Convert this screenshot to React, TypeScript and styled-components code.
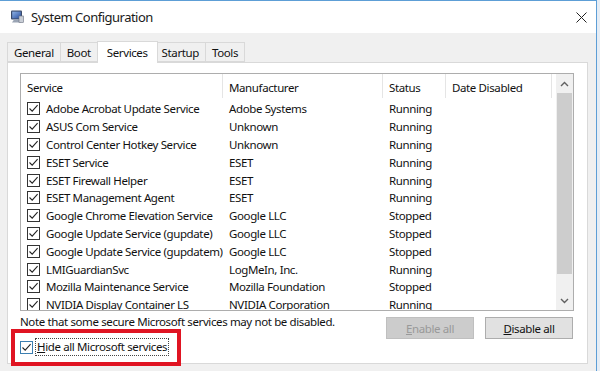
import React from 'react'
import styled, { createGlobalStyle } from 'styled-components'

const GlobalStyle = createGlobalStyle`
  html, body {
    margin: 0;
    padding: 0;
    background: #eef2f7;
  }
  body {
    font-family: 'Noto Sans', 'Open Sans', sans-serif;
    color: #000;
  }
`

type Service = {
  name: string
  maker: string
  status: string
}

const services: Service[] = [
  { name: 'Adobe Acrobat Update Service', maker: 'Adobe Systems', status: 'Running' },
  { name: 'ASUS Com Service', maker: 'Unknown', status: 'Running' },
  { name: 'Control Center Hotkey Service', maker: 'Unknown', status: 'Running' },
  { name: 'ESET Service', maker: 'ESET', status: 'Running' },
  { name: 'ESET Firewall Helper', maker: 'ESET', status: 'Running' },
  { name: 'ESET Management Agent', maker: 'ESET', status: 'Running' },
  { name: 'Google Chrome Elevation Service', maker: 'Google LLC', status: 'Stopped' },
  { name: 'Google Update Service (gupdate)', maker: 'Google LLC', status: 'Stopped' },
  { name: 'Google Update Service (gupdatem)', maker: 'Google LLC', status: 'Stopped' },
  { name: 'LMIGuardianSvc', maker: 'LogMeIn, Inc.', status: 'Running' },
  { name: 'Mozilla Maintenance Service', maker: 'Mozilla Foundation', status: 'Stopped' },
  { name: 'NVIDIA Display Container LS', maker: 'NVIDIA Corporation', status: 'Running' },
]

const tabs = ['General', 'Boot', 'Services', 'Startup', 'Tools']

const cols = [202, 160, 63, 106]

const Screen = styled.div`
  position: relative;
  width: 600px;
  height: 371px;
  overflow: hidden;
  display: flex;
`

const Frame = styled.div`
  width: 597px;
  height: 371px;
  border-top: 1px solid #5d9ed6;
  border-right: 1px solid #5d9ed6;
  display: flex;
  flex-direction: column;
  box-sizing: border-box;
`

const Beside = styled.div`
  flex: 1;
  background: #e6edf5;
`

const TitleBar = styled.div`
  height: 32px;
  background: #fff;
  display: flex;
  align-items: center;
  padding: 0 9px 0 10px;
  font-size: 13px;
  letter-spacing: -0.5px;
  gap: 7px;
  flex-shrink: 0;
`

const TitleText = styled.span`
  flex: 1;
  color: #1a1a1a;
`

const Body = styled.div`
  flex: 1;
  background: #f0f0f0;
  padding: 8px 8px 7px 7px;
  display: flex;
  flex-direction: column;
  font-size: 11.5px;
  letter-spacing: -0.38px;
`

const TabRow = styled.div`
  display: flex;
  align-items: flex-end;
  height: 21px;
  position: relative;
  z-index: 1;
`

const Tab = styled.div<{ $active?: boolean }>`
  box-sizing: border-box;
  height: ${(p) => (p.$active ? '22px' : '20px')};
  padding: 0 ${(p) => (p.$active ? '9px' : '6px')};
  margin: 0 ${(p) => (p.$active ? '-2px' : '0')} ${(p) => (p.$active ? '-1px' : '0')};
  background: ${(p) => (p.$active ? '#fff' : '#f0f0f0')};
  border: 1px solid #d9d9d9;
  border-bottom: ${(p) => (p.$active ? 'none' : '1px solid #d9d9d9')};
  margin-left: -1px;
  display: flex;
  align-items: center;
  position: relative;
  z-index: ${(p) => (p.$active ? 2 : 1)};
  color: #111;
  &:first-child {
    margin-left: 0;
  }
`

const Panel = styled.div`
  flex: 1;
  background: #fff;
  border: 1px solid #d9d9d9;
  padding: 10px 13px 0 12px;
  display: flex;
  flex-direction: column;
`

const List = styled.div`
  height: 238px;
  box-sizing: border-box;
  border: 1px solid #adadad;
  display: flex;
  overflow: hidden;
`

const Table = styled.div`
  flex: 1;
  overflow: hidden;
`

const Header = styled.div`
  display: flex;
  height: 24px;
  margin-bottom: 2px;
`

const HeadCell = styled.div<{ $w: number }>`
  width: ${(p) => p.$w}px;
  box-sizing: border-box;
  padding-left: 6px;
  padding-top: 2px;
  border-right: 1px solid #e5e5e5;
  display: flex;
  align-items: center;
  color: #111;
`

const Row = styled.div`
  display: flex;
  height: 17.8px;
  align-items: center;
  white-space: nowrap;
`

const Cell = styled.div<{ $w: number }>`
  width: ${(p) => p.$w}px;
  box-sizing: border-box;
  padding-left: 6px;
  display: flex;
  align-items: center;
  gap: 6px;
  overflow: hidden;
  color: #111;
`

const Box = styled.span<{ $focus?: boolean }>`
  width: 13px;
  height: 13px;
  box-sizing: border-box;
  border: 1px solid ${(p) => (p.$focus ? '#3c7fb1' : '#333')};
  background: #fff;
  display: inline-flex;
  align-items: center;
  justify-content: center;
  flex-shrink: 0;
`

const ScrollBar = styled.div`
  width: 17px;
  background: #f0f0f0;
  display: flex;
  flex-direction: column;
  align-items: center;
`

const Arrow = styled.div`
  height: 19px;
  width: 17px;
  display: flex;
  align-items: center;
  justify-content: center;
  flex-shrink: 0;
`

const Thumb = styled.div`
  width: 15px;
  height: 181px;
  background: #cdcdcd;
`

const Track = styled.div`
  flex: 1;
`

const Footer = styled.div`
  display: flex;
  justify-content: space-between;
  padding-top: 3px;
`

const Note = styled.span`
  color: #111;
`

const Buttons = styled.div`
  display: flex;
  gap: 11px;
  padding-top: 3px;
  margin-right: 1px;
`

const Button = styled.div<{ $disabled?: boolean }>`
  width: 88px;
  height: 22px;
  box-sizing: border-box;
  border: 1px solid ${(p) => (p.$disabled ? '#bfbfbf' : '#adadad')};
  background: ${(p) => (p.$disabled ? '#cccccc' : '#e1e1e1')};
  color: ${(p) => (p.$disabled ? '#999' : '#111')};
  display: flex;
  align-items: center;
  justify-content: center;
`

const HideRow = styled.div`
  display: flex;
  align-items: center;
  gap: 2px;
  margin-top: -1px;
`

const FocusLabel = styled.span`
  border: 1px dotted #444;
  padding: 0 1px 1px 1px;
  line-height: 15px;
  color: #111;
`

const Highlight = styled.div`
  position: absolute;
  left: 11px;
  top: 329px;
  width: 170px;
  height: 37px;
  box-sizing: border-box;
  border: 4px solid #e01422;
  pointer-events: none;
`

const Check = () => (
  <svg width="11" height="11" viewBox="0 0 11 11">
    <path d="M1.5 5.5 L4.2 8.2 L9.6 2.2" fill="none" stroke="#222" strokeWidth="1.1" />
  </svg>
)

const AppIcon = () => (
  <svg width="14" height="14" viewBox="0 0 14 14">
    <defs>
      <linearGradient id="scr" x1="0" y1="0" x2="1" y2="1">
        <stop offset="0" stopColor="#8fb3e6" />
        <stop offset="1" stopColor="#2a4f9e" />
      </linearGradient>
    </defs>
    <rect x="1" y="0.5" width="11" height="9" rx="1" fill="#3a4a6a" />
    <rect x="2.2" y="1.6" width="8.6" height="6.8" fill="url(#scr)" />
    <path d="M4 9.5 L9 9.5 L11 12.5 L2 12.5 Z" fill="#9aa4b4" />
    <rect x="9" y="6" width="4.5" height="6.5" fill="#c9ced6" stroke="#6b7280" strokeWidth="0.6" />
  </svg>
)

const CloseIcon = () => (
  <svg width="11" height="11" viewBox="0 0 11 11">
    <path d="M0.5 0.5 L10.5 10.5 M10.5 0.5 L0.5 10.5" stroke="#222" strokeWidth="1" />
  </svg>
)

const Chevron = ({ up }: { up?: boolean }) => (
  <svg width="9" height="6" viewBox="0 0 9 6">
    <path
      d={up ? 'M1 5 L4.5 1.5 L8 5' : 'M1 1 L4.5 4.5 L8 1'}
      fill="none"
      stroke="#606060"
      strokeWidth="1.4"
    />
  </svg>
)

const App = () => {
  return (
    <>
      <GlobalStyle />
      <Screen>
        <Frame>
          <TitleBar>
            <AppIcon />
            <TitleText>System Configuration</TitleText>
            <CloseIcon />
          </TitleBar>
          <Body>
            <TabRow>
              {tabs.map((t) => (
                <Tab key={t} $active={t === 'Services'}>
                  {t}
                </Tab>
              ))}
            </TabRow>
            <Panel>
              <List>
                <Table>
                  <Header>
                    <HeadCell $w={cols[0]}>Service</HeadCell>
                    <HeadCell $w={cols[1]}>Manufacturer</HeadCell>
                    <HeadCell $w={cols[2]}>Status</HeadCell>
                    <HeadCell $w={cols[3]}>Date Disabled</HeadCell>
                  </Header>
                  {services.map((s) => (
                    <Row key={s.name}>
                      <Cell $w={cols[0]}>
                        <Box>
                          <Check />
                        </Box>
                        {s.name}
                      </Cell>
                      <Cell $w={cols[1]}>{s.maker}</Cell>
                      <Cell $w={cols[2]}>{s.status}</Cell>
                      <Cell $w={cols[3]} />
                    </Row>
                  ))}
                </Table>
                <ScrollBar>
                  <Arrow>
                    <Chevron up />
                  </Arrow>
                  <Thumb />
                  <Track />
                  <Arrow>
                    <Chevron />
                  </Arrow>
                </ScrollBar>
              </List>
              <Footer>
                <Note>Note that some secure Microsoft services may not be disabled.</Note>
                <Buttons>
                  <Button $disabled>
                    <span>
                      <u>E</u>nable all
                    </span>
                  </Button>
                  <Button>
                    <span>
                      <u>D</u>isable all
                    </span>
                  </Button>
                </Buttons>
              </Footer>
              <HideRow>
                <Box $focus>
                  <Check />
                </Box>
                <FocusLabel>
                  <u>H</u>ide all Microsoft services
                </FocusLabel>
              </HideRow>
            </Panel>
          </Body>
        </Frame>
        <Beside />
        <Highlight />
      </Screen>
    </>
  )
}

export default App
